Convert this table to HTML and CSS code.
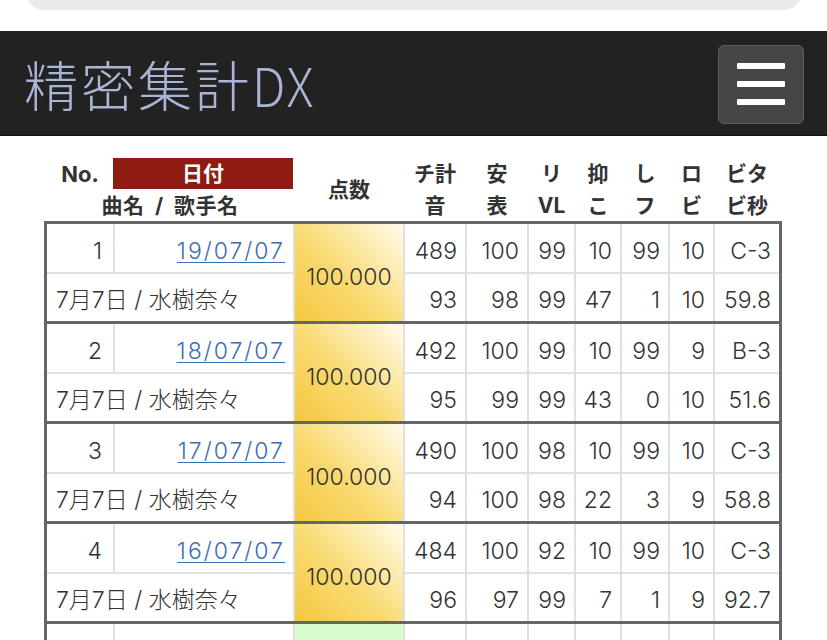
FILE: index.html
```html
<!DOCTYPE html>
<html lang="ja">
<head>
<meta charset="utf-8">
<title>精密集計DX</title>
<link rel="stylesheet" href="styles.css">
</head>
<body>
<div class="top-strip"><div class="url-bar"></div></div>
<header class="navbar">
  <div class="brand">精密集計<span class="brand-latin">DX</span></div>
  <button class="menu-btn" aria-label="menu"><span></span><span></span><span></span></button>
</header>
<main class="content">
  <div class="thead">
    <div class="h-no">No.</div>
    <div class="h-date"><span>日付</span></div>
    <div class="h-score">点数</div>
    <div class="h c4 r1">チ計</div>
    <div class="h c5 r1">安</div>
    <div class="h c6 r1">リ</div>
    <div class="h c7 r1">抑</div>
    <div class="h c8 r1">し</div>
    <div class="h c9 r1">ロ</div>
    <div class="h c10 r1">ビタ</div>
    <div class="h-name">曲名 / 歌手名</div>
    <div class="h c4 r2">音</div>
    <div class="h c5 r2">表</div>
    <div class="h c6 r2">VL</div>
    <div class="h c7 r2">こ</div>
    <div class="h c8 r2">フ</div>
    <div class="h c9 r2">ビ</div>
    <div class="h c10 r2">ビ秒</div>
  </div>

  <div class="groups">
    <div class="group">
      <div class="cell">1</div>
      <div class="cell"><a href="#" class="date">19/07/07</a></div>
      <div class="cell score gold">100.000</div>
      <div class="cell">489</div><div class="cell">100</div><div class="cell">99</div><div class="cell">10</div><div class="cell">99</div><div class="cell">10</div><div class="cell">C-3</div>
      <div class="cell name">7月7日 / 水樹奈々</div>
      <div class="cell">93</div><div class="cell">98</div><div class="cell">99</div><div class="cell">47</div><div class="cell">1</div><div class="cell">10</div><div class="cell">59.8</div>
    </div>
    <div class="group">
      <div class="cell">2</div>
      <div class="cell"><a href="#" class="date">18/07/07</a></div>
      <div class="cell score gold">100.000</div>
      <div class="cell">492</div><div class="cell">100</div><div class="cell">99</div><div class="cell">10</div><div class="cell">99</div><div class="cell">9</div><div class="cell">B-3</div>
      <div class="cell name">7月7日 / 水樹奈々</div>
      <div class="cell">95</div><div class="cell">99</div><div class="cell">99</div><div class="cell">43</div><div class="cell">0</div><div class="cell">10</div><div class="cell">51.6</div>
    </div>
    <div class="group">
      <div class="cell">3</div>
      <div class="cell"><a href="#" class="date">17/07/07</a></div>
      <div class="cell score gold">100.000</div>
      <div class="cell">490</div><div class="cell">100</div><div class="cell">98</div><div class="cell">10</div><div class="cell">99</div><div class="cell">10</div><div class="cell">C-3</div>
      <div class="cell name">7月7日 / 水樹奈々</div>
      <div class="cell">94</div><div class="cell">100</div><div class="cell">98</div><div class="cell">22</div><div class="cell">3</div><div class="cell">9</div><div class="cell">58.8</div>
    </div>
    <div class="group">
      <div class="cell">4</div>
      <div class="cell"><a href="#" class="date">16/07/07</a></div>
      <div class="cell score gold">100.000</div>
      <div class="cell">484</div><div class="cell">100</div><div class="cell">92</div><div class="cell">10</div><div class="cell">99</div><div class="cell">10</div><div class="cell">C-3</div>
      <div class="cell name">7月7日 / 水樹奈々</div>
      <div class="cell">96</div><div class="cell">97</div><div class="cell">99</div><div class="cell">7</div><div class="cell">1</div><div class="cell">9</div><div class="cell">92.7</div>
    </div>
    <div class="group">
      <div class="cell"></div>
      <div class="cell"></div>
      <div class="cell score green"></div>
      <div class="cell"></div><div class="cell"></div><div class="cell"></div><div class="cell"></div><div class="cell"></div><div class="cell"></div><div class="cell"></div>
      <div class="cell name"></div>
      <div class="cell"></div><div class="cell"></div><div class="cell"></div><div class="cell"></div><div class="cell"></div><div class="cell"></div><div class="cell"></div>
    </div>
  </div>
</main>
</body>
</html>
```

FILE: styles.css
```css
* { box-sizing: border-box; }

html, body {
  margin: 0;
  padding: 0;
  background: #fff;
}

body {
  font-family: "Inter", "Noto Sans CJK JP", sans-serif;
  color: #333;
  overflow: hidden;
}

.top-strip {
  height: 31px;
  overflow: hidden;
  padding: 0 24px 0 25px;
}

.url-bar {
  height: 40px;
  margin-top: -30px;
  background: #e9e9ed;
  border-radius: 20px;
}

.navbar {
  height: 105px;
  background: #222;
  border-bottom: 1px solid #111;
  display: flex;
  align-items: center;
  justify-content: space-between;
  padding: 0 23px 0 24px;
}

.brand {
  font-family: "Noto Sans CJK JP", sans-serif;
  font-weight: 200;
  font-size: 54px;
  line-height: 1;
  color: #aab5d6;
  letter-spacing: 3px;
  margin-top: 2px;
}

.brand-latin {
  font-family: "Noto Sans CJK JP", sans-serif;
  font-weight: 200;
  display: inline-block;
  transform: scaleX(0.92);
  transform-origin: left center;
  letter-spacing: 2px;
}

.menu-btn {
  width: 86px;
  height: 79px;
  background: #464646;
  border: 1px solid #5e5e5e;
  border-radius: 6px;
  display: flex;
  flex-direction: column;
  align-items: center;
  justify-content: center;
  gap: 12px;
  padding: 0;
  margin-top: 2px;
}

.menu-btn span {
  display: block;
  width: 48px;
  height: 6px;
  background: #fff;
  border-radius: 1px;
}

.content {
  padding: 22px 0 0 44px;
}

.thead,
.group {
  display: grid;
  grid-template-columns: 66px 178px 108px 60px 60px 45px 44px 46px 43px 64px;
  column-gap: 2px;
  width: 738px;
}

.thead {
  grid-template-rows: 31px 32px;
  padding: 0 3px;
  font-family: "Inter", "Noto Sans CJK JP", sans-serif;
  font-weight: 700;
  font-size: 21px;
  color: #333;
}

.thead > div {
  display: flex;
  align-items: center;
  justify-content: center;
  line-height: 1;
  white-space: pre;
}

.h-no { grid-column: 1; grid-row: 1; font-size: 22px; }

.h-date {
  grid-column: 2;
  grid-row: 1;
  margin-left: -2px;
  background: #8e1c13;
  color: #fff;
}

.h-score { grid-column: 3; grid-row: 1 / span 2; }
.h-name { grid-column: 1 / span 2; grid-row: 2; word-spacing: 5px; letter-spacing: 0.5px; }

.r1 { grid-row: 1; }
.r2 { grid-row: 2; }
.c4 { grid-column: 4; }
.c5 { grid-column: 5; }
.c6 { grid-column: 6; }
.c7 { grid-column: 7; }
.c8 { grid-column: 8; }
.c9 { grid-column: 9; }
.c10 { grid-column: 10; }

.group {
  grid-template-rows: 48px 47px;
  row-gap: 2px;
  background: #e0e0e0;
  border: 3px solid #666;
  border-top: none;
}

.group:first-child {
  border-top: 3px solid #666;
}

.cell {
  background: #fff;
  display: flex;
  align-items: center;
  justify-content: flex-end;
  padding: 6px 8px 0;
  font-family: "Inter", "Noto Sans CJK JP", sans-serif;
  font-weight: 300;
  font-size: 23px;
  line-height: 1;
  color: #333;
  white-space: pre;
}

.cell:first-child { padding-right: 11px; }

.date {
  color: #3d6db4;
  text-decoration: underline;
  text-underline-offset: 3px;
  text-decoration-thickness: 1px;
  letter-spacing: 2px;
}

.score {
  grid-column: 3;
  grid-row: 1 / span 2;
  justify-content: center;
  padding: 9px 0 0;
}

.gold {
  background: linear-gradient(45deg, #f5c73f 0%, #f9da72 45%, #fdf0bf 80%, #fffbed 100%);
}

.green {
  background: #d6fbcd;
}

.name {
  grid-column: 1 / span 2;
  justify-content: flex-start;
  padding-left: 9px;
}
```
